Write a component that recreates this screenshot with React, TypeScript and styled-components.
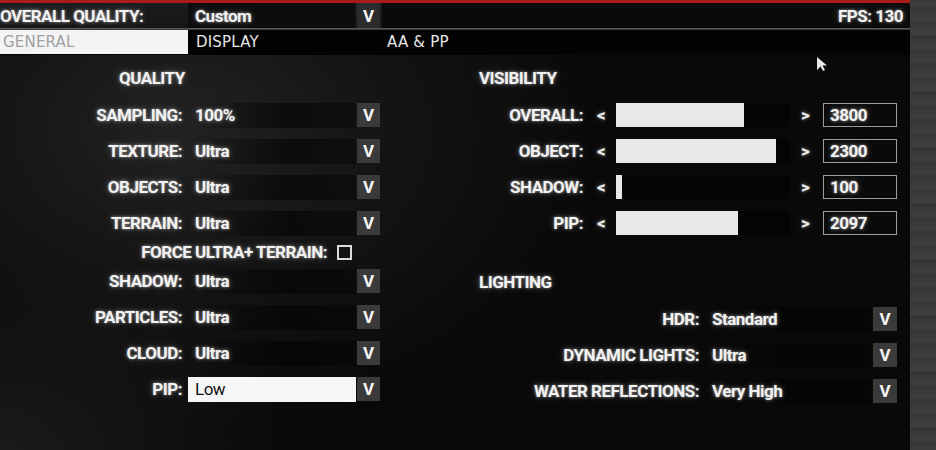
import React from "react";
import styled, { createGlobalStyle } from "styled-components";

const GlobalStyle = createGlobalStyle`
  html, body {
    margin: 0;
    padding: 0;
    background: #000;
  }
  body {
    width: 936px;
    height: 450px;
    overflow: hidden;
    font-family: Roboto, "Liberation Sans", sans-serif;
  }
`;

type SelectRow = { label: string; value: string; highlighted?: boolean };
type SliderRow = { label: string; fill: number; value: number };

const quality: SelectRow[] = [
  { label: "SAMPLING:", value: "100%" },
  { label: "TEXTURE:", value: "Ultra" },
  { label: "OBJECTS:", value: "Ultra" },
  { label: "TERRAIN:", value: "Ultra" },
];

const qualityMore: SelectRow[] = [
  { label: "SHADOW:", value: "Ultra" },
  { label: "PARTICLES:", value: "Ultra" },
  { label: "CLOUD:", value: "Ultra" },
  { label: "PIP:", value: "Low", highlighted: true },
];

const visibility: SliderRow[] = [
  { label: "OVERALL:", fill: 128, value: 3800 },
  { label: "OBJECT:", fill: 160, value: 2300 },
  { label: "SHADOW:", fill: 6, value: 100 },
  { label: "PIP:", fill: 122, value: 2097 },
];

const lighting: SelectRow[] = [
  { label: "HDR:", value: "Standard" },
  { label: "DYNAMIC LIGHTS:", value: "Ultra" },
  { label: "WATER REFLECTIONS:", value: "Very High" },
];

const glow = "0 0 3px rgba(255, 255, 255, 0.55), 0 0 8px rgba(255, 255, 255, 0.25)";

// game UI type: tall bold face, slightly condensed
const uiText = `
  color: #f2f2f2;
  font-weight: 700;
  font-size: 17px;
  letter-spacing: -0.5px;
  text-shadow: ${glow};
`;

const App: React.FC = () => (
  <>
    <GlobalStyle />
    <Page>
      <Main>
        <RedLine />
        <Header>
          <HeaderLabel>OVERALL QUALITY:</HeaderLabel>
          <HeaderField>Custom</HeaderField>
          <VButton $dark>V</VButton>
          <FpsField>FPS: 130</FpsField>
        </Header>
        <Divider />
        <Tabs>
          <Tab $active>GENERAL</Tab>
          <Tab $width={191}>DISPLAY</Tab>
          <Tab>AA &amp; PP</Tab>
        </Tabs>
        <Content>
          <LeftColumn>
            <Heading $top={13} $left={119}>QUALITY</Heading>
            {quality.map((r) => (
              <Row key={r.label} $labelWidth={182}>
                <Label>{r.label}</Label>
                <Field $width={168}>{r.value}</Field>
                <VButton>V</VButton>
              </Row>
            ))}
            <CheckRow>
              <Label>FORCE ULTRA+ TERRAIN:</Label>
              <CheckBox />
            </CheckRow>
            {qualityMore.map((r) => (
              <Row key={r.label} $labelWidth={182}>
                <Label>{r.label}</Label>
                <Field $width={168} $highlighted={r.highlighted}>
                  {r.value}
                </Field>
                <VButton>V</VButton>
              </Row>
            ))}
          </LeftColumn>
          <RightColumn>
            <Heading $top={13} $left={19}>VISIBILITY</Heading>
            {visibility.map((r) => (
              <Row key={r.label} $labelWidth={123}>
                <Label>{r.label}</Label>
                <Arrow>&lt;</Arrow>
                <Track>
                  <Fill style={{ width: r.fill }} />
                </Track>
                <Arrow>&gt;</Arrow>
                <NumberBox>{r.value}</NumberBox>
              </Row>
            ))}
            <Heading $top={31} $left={19}>LIGHTING</Heading>
            {lighting.map((r) => (
              <Row key={r.label} $labelWidth={239}>
                <Label>{r.label}</Label>
                <Field $width={167}>{r.value}</Field>
                <VButton $wide>V</VButton>
              </Row>
            ))}
          </RightColumn>
        </Content>
        <Cursor viewBox="0 0 12 16">
          <path d="M1 1 L1 14 L4.5 10.5 L7 15 L9 14 L6.5 9.5 L11 9.5 Z" fill="#e8e8e8" />
        </Cursor>
      </Main>
      <SideStrip />
    </Page>
  </>
);

export default App;

const Page = styled.div`
  display: flex;
  width: 936px;
  height: 450px;
`;

const Main = styled.div`
  position: relative;
  width: 910px;
  display: flex;
  flex-direction: column;
  background:
    radial-gradient(ellipse 420px 300px at 180px 130px, #222 0%, #151515 45%, rgba(10, 10, 10, 0) 100%),
    radial-gradient(ellipse 300px 200px at 0px 450px, #1a1a1a 0%, rgba(10, 10, 10, 0) 100%),
    #090909;
`;

const SideStrip = styled.div`
  flex: 1;
  background: repeating-linear-gradient(
    180deg,
    #3a3a3a 0px,
    #3f3f3f 6px,
    #353535 9px,
    #3c3c3c 14px
  );
`;

const RedLine = styled.div`
  height: 3px;
  background: #a81c1c;
`;

const Header = styled.div`
  height: 25px;
  display: flex;
  align-items: stretch;
  gap: 2px;
  background: linear-gradient(180deg, #1c1c1c, #161616);
`;

const HeaderLabel = styled.div`
  width: 186px;
  display: flex;
  align-items: center;
  ${uiText}
`;

const HeaderField = styled.div`
  width: 160px;
  padding-left: 7px;
  display: flex;
  align-items: center;
  background: #0c0c0c;
  ${uiText}
`;

const FpsField = styled.div`
  flex: 1;
  display: flex;
  align-items: center;
  justify-content: flex-end;
  padding-right: 7px;
  background: #0a0a0a;
  ${uiText}
`;

const Divider = styled.div`
  height: 2px;
  background: linear-gradient(180deg, #6a6a6a, #2a2a2a);
`;

const Tabs = styled.div`
  height: 25px;
  display: flex;
  background: #030303;
`;

const Tab = styled.div<{ $active?: boolean; $width?: number }>`
  width: ${({ $active, $width }) => ($active ? "188px" : $width ? `${$width}px` : "auto")};
  padding-left: ${({ $active }) => ($active ? "3px" : "8px")};
  box-sizing: border-box;
  display: flex;
  align-items: center;
  background: ${({ $active }) => ($active ? "#f4f4f4" : "transparent")};
  color: ${({ $active }) => ($active ? "#a0a0a0" : "#e6e6e6")};
  font-family: "DejaVu Sans", sans-serif;
  font-size: 15px;
  letter-spacing: 0.2px;
  margin-bottom: 1px;
`;

const Content = styled.div`
  display: grid;
  grid-template-columns: 460px 450px;
`;

const LeftColumn = styled.div`
  display: flex;
  flex-direction: column;
`;

const RightColumn = styled.div`
  display: flex;
  flex-direction: column;
`;

const Heading = styled.div<{ $top: number; $left: number }>`
  padding-top: ${({ $top }) => $top}px;
  padding-left: ${({ $left }) => $left}px;
  margin-bottom: 9px;
  line-height: 20px;
  height: 20px;
  ${uiText}
`;

const Label = styled.div`
  text-align: right;
  white-space: nowrap;
  ${uiText}
`;

const Row = styled.div<{ $labelWidth: number }>`
  height: 36px;
  display: flex;
  align-items: center;

  & > ${Label} {
    width: ${({ $labelWidth }) => $labelWidth}px;
    margin-right: 6px;
  }
`;

const Field = styled.div<{ $width: number; $highlighted?: boolean }>`
  width: ${({ $width }) => $width}px;
  height: 25px;
  box-sizing: border-box;
  padding-left: 7px;
  display: flex;
  align-items: center;
  ${uiText}
  font-weight: ${({ $highlighted }) => ($highlighted ? 400 : 700)};
  color: ${({ $highlighted }) => ($highlighted ? "#111" : "#f2f2f2")};
  background: ${({ $highlighted }) =>
    $highlighted ? "#f6f6f6" : "linear-gradient(90deg, rgba(0,0,0,0) 0%, rgba(0,0,0,0.55) 60%, rgba(0,0,0,0.35) 100%)"};
  text-shadow: ${({ $highlighted }) => ($highlighted ? "none" : glow)};
  margin-right: 1px;
`;

const VButton = styled.div<{ $dark?: boolean; $wide?: boolean }>`
  width: ${({ $wide }) => ($wide ? "24px" : "23px")};
  height: ${({ $dark }) => ($dark ? "auto" : "24px")};
  display: flex;
  align-items: center;
  justify-content: center;
  background: ${({ $dark }) => ($dark ? "#2c2c2c" : "#3a3a3a")};
  color: #f4f4f4;
  font-weight: 700;
  font-size: 17px;
`;

const CheckRow = styled.div`
  height: 22px;
  display: flex;
  align-items: center;

  & > ${Label} {
    width: 327px;
    margin-right: 10px;
  }
`;

const CheckBox = styled.div`
  width: 11px;
  height: 11px;
  border: 2px solid #dcdcdc;
`;

const Arrow = styled.div`
  width: 12px;
  margin-left: 8px;
  ${uiText}
`;

const Track = styled.div`
  width: 173px;
  height: 24px;
  margin: 0 4px 0 7px;
  background: #040404;
`;

const Fill = styled.div`
  height: 100%;
  background: #e8e8e8;
`;

const NumberBox = styled.div`
  width: 74px;
  height: 24px;
  margin-left: 10px;
  box-sizing: border-box;
  border: 1px solid #9c9c9c;
  padding-left: 6px;
  display: flex;
  align-items: center;
  background: #0a0a0a;
  ${uiText}
`;

const Cursor = styled.svg`
  position: absolute;
  left: 816px;
  top: 56px;
  width: 12px;
  height: 16px;
`;
